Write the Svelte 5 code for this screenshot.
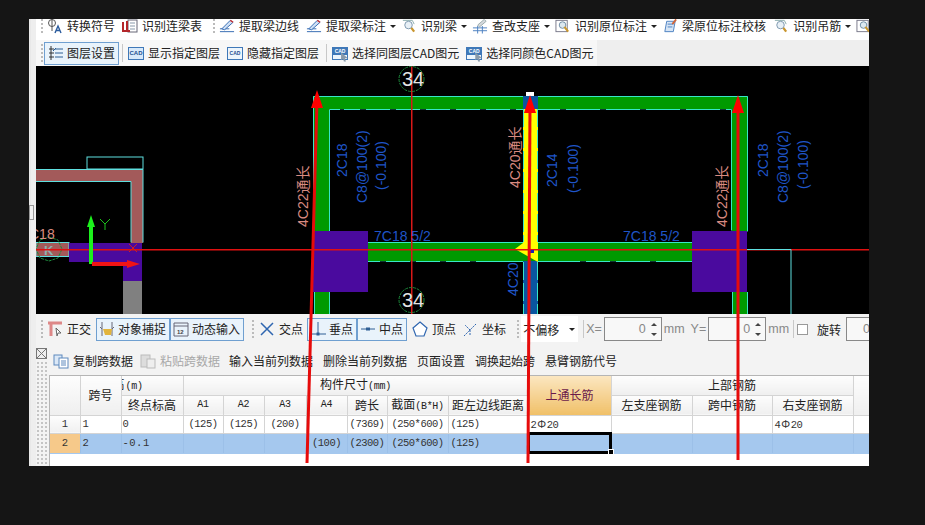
<script>
  const row1 = [
    { icon: 'sym', label: '转换符号' },
    { icon: 'tbl', label: '识别连梁表', sepAfter: true },
    { icon: 'pen', label: '提取梁边线' },
    { icon: 'pen', label: '提取梁标注', drop: true },
    { icon: 'mag', label: '识别梁', drop: true },
    { icon: 'sup', label: '查改支座', drop: true },
    { icon: 'box', label: '识别原位标注', drop: true },
    { icon: 'chk', label: '梁原位标注校核' },
    { icon: 'mag', label: '识别吊筋', drop: true },
    { icon: 'box', label: '' }
  ];
  const row2 = [
    { label: '显示指定图层', kind: 'solid' },
    { label: '隐藏指定图层', kind: 'small', sepAfter: true },
    { label: '选择同图层CAD图元', kind: 'pick' },
    { label: '选择同颜色CAD图元', kind: 'pick' }
  ];
  const tableActions = ['输入当前列数据', '删除当前列数据', '页面设置', '调换起始跨', '悬臂钢筋代号'];

  const colWidths = [30, 41, 62, 40, 41, 42, 41, 40, 61, 80, 83, 81, 80, 81, 16];

  const rows = [
    { n: 1, no: '1', end: '0', cells: ['(125)', '(125)', '(200)', '', '(7369)', '(250*600)', '(125)', ['2', '20'], '', '', ['4', '20'], ''] },
    { n: 2, no: '2', end: '-0.1', cells: ['', '', '', '(100)', '(2300)', '(250*600)', '(125)', '', '', '', '', ''], active: true }
  ];

  // [bottom x, bottom y, top x, tip y]
  const redLines = [
    [307, 463, 317, 90],
    [528, 463, 530, 95],
    [738, 460, 738, 95]
  ];
</script>

<div class="window">
  <div class="bar bar-top">
    <span class="grip"></span>
    {#each row1 as item}
      <span class="tool">
        {#if item.icon === 'sym'}
          <svg width="16" height="16" viewBox="0 0 16 16"><circle cx="5" cy="5" r="3.5" fill="none" stroke="#555" /><path d="M5 1v12" stroke="#555" /><path d="M8 15l3-7 3 7M9.5 12.5h3" stroke="#2b5c9e" stroke-width="1.4" fill="none" /></svg>
        {:else if item.icon === 'tbl'}
          <svg width="16" height="16" viewBox="0 0 16 16"><rect x="6" y="2" width="9" height="12" fill="#fff" stroke="#667" /><path d="M8 5h5M8 8h5M8 11h5" stroke="#89a" /><path d="M1 4v9h7M5 3v9" stroke="#b3262a" stroke-width="2" fill="none" /></svg>
        {:else if item.icon === 'pen'}
          <svg width="16" height="16" viewBox="0 0 17 16"><path d="M1 14h15M1 11h10" stroke="#2f66b0" /><path d="M3 11l9-9 3 2-9 8z" fill="#cfe0f5" stroke="#2f66b0" /><path d="M12 2l3 2" stroke="#c33" stroke-width="1.5" /></svg>
        {:else if item.icon === 'mag'}
          <svg width="16" height="16" viewBox="0 0 17 16"><path d="M2 2h10l2 4" fill="none" stroke="#8aa" /><circle cx="8" cy="7" r="4" fill="#e8f0f6" stroke="#7b95ad" /><path d="M11 10l3 4" stroke="#c9962e" stroke-width="2.4" /></svg>
        {:else if item.icon === 'sup'}
          <svg width="16" height="16" viewBox="0 0 17 16"><path d="M1 10h15M1 13h15M6 8v8M11 8v8" stroke="#4a7fc0" /><path d="M6 7l7-6 2 2-7 6z" fill="#d5d9de" stroke="#9aa" /></svg>
        {:else if item.icon === 'box'}
          <svg width="16" height="16" viewBox="0 0 17 16"><rect x="1" y="2" width="12" height="12" fill="#fff" stroke="#778" /><circle cx="8" cy="7" r="3.5" fill="#dce8f0" stroke="#6d8ba3" /><path d="M10 9l4 5" stroke="#c9962e" stroke-width="2.2" /></svg>
        {:else}
          <svg width="16" height="16" viewBox="0 0 17 16"><path d="M3 14l2-11h9l-2 11z" fill="#d7e5f5" stroke="#4a7fc0" /><path d="M6 6h6M6 9h5" stroke="#4a7fc0" /><path d="M11 6l4-5" stroke="#d0653a" stroke-width="2" /></svg>
        {/if}
        {#if item.label}<span>{item.label}</span>{/if}
        {#if item.drop}<i class="caret"></i>{/if}
      </span>
      {#if item.sepAfter}<span class="grip grip-mid"></span>{/if}
    {/each}
  </div>

  <div class="bar bar-layer">
    <span class="grip"></span>
    <span class="tool tool-on">
      <svg width="16" height="16" viewBox="0 0 16 16"><path d="M3 1v14M1 4h5M1 8h5M1 12h5" stroke="#333" /><path d="M8 3l-3 3M7 4h8M7 8h8M7 12h8" stroke="#2d5f94" /></svg>
      <span>图层设置</span>
    </span>
    <span class="sep"></span>
    {#each row2 as item}
      <span class="tool tool-cad">
        <span class="cad cad-{item.kind}">CAD</span>
        <span>{item.label}</span>
      </span>
      {#if item.sepAfter}<span class="sep"></span>{/if}
    {/each}
  </div>

  <div class="canvas">
    <svg width="833" height="248" viewBox="36 66 833 248">
      <!-- left hand column and beam -->
      <rect x="87" y="157" width="56" height="12" fill="none" stroke="#5fe0e0" />
      <rect x="36" y="169" width="107" height="13" fill="#a35a5a" />
      <rect x="131" y="182" width="12" height="61" fill="#a35a5a" />
      <path d="M36 169.500h107v73M36 181.500h95v61" fill="none" stroke="#5fe0e0" />
      <rect x="36" y="242.500" width="33" height="14" fill="#a35a5a" stroke="#5fe0e0" />
      <rect x="69" y="243" width="73" height="19" fill="#4a0a9e" />
      <rect x="123" y="243" width="19" height="38" fill="#4a0a9e" />
      <rect x="123" y="281" width="19" height="33" fill="#808080" />
      <polygon points="49,237 58,240 62,249 58,258 49,261 40,258 36,249 40,240" fill="none" stroke="#1d8a3c" stroke-dasharray="3 1" />
      <text x="29" y="239" class="t t-salmon">C18</text>
      <text x="44" y="255" class="t t-k">K</text>

      <!-- green frame -->
      <rect x="313" y="96" width="435" height="13" fill="#009a00" />
      <rect x="314" y="109" width="15" height="122" fill="#009a00" />
      <rect x="732" y="109" width="16" height="122" fill="#009a00" />
      <rect x="314" y="292" width="15" height="22" fill="#009a00" />
      <rect x="732" y="292" width="16" height="22" fill="#009a00" />
      <rect x="368" y="242" width="325" height="20" fill="#009a00" />
      <path d="M313.500 231V96.500h434v135M329.500 231V109.500h402v121M314.500 292v22M329.500 292v22M732.500 292v22M747.500 292v22" fill="none" stroke="#38e6c8" />
      <path d="M368 242.500h325M368 261.500h325" fill="none" stroke="#38e6c8" />
      <path d="M340 110h4M360 110h6M390 110h6M420 110h6M450 110h6M480 110h6M510 110h6M560 110h6M600 110h6M640 110h6M680 110h6M720 110h6M380 262h6M410 262h6M440 262h6M470 262h6M580 262h6M610 262h6M650 262h6" stroke="#000" stroke-width="1.500" />

      <!-- centre beam -->
      <rect x="523" y="96" width="15" height="13" fill="#0a55a0" />
      <rect x="523" y="109" width="15" height="134" fill="#ffff00" />
      <rect x="523" y="261" width="15" height="53" fill="#0a55a0" />
      <polygon points="515,249 523,243 538,243 538,262" fill="#ffff00" />
      <rect x="526" y="92" width="8" height="4" fill="#fff" />
      <path d="M523.500 109v133M537.500 109v133M523.500 262v52M537.500 262v52" stroke="#38e6c8" stroke-dasharray="18 3" />

      <!-- purple columns -->
      <rect x="313" y="231" width="55" height="61" fill="#4a0a9e" />
      <rect x="692" y="231" width="55" height="61" fill="#4a0a9e" />

      <!-- axis lines -->
      <rect x="36" y="249" width="833" height="1.500" fill="#e01010" />
      <rect x="411" y="66" width="1.500" height="248" fill="#d81818" />
      <path d="M747 249.500h44v64.500" fill="none" stroke="#5fe0e0" />
      <rect x="528" y="250" width="6" height="3" fill="#2020b0" />
      <circle cx="411.500" cy="79" r="12.500" fill="none" stroke="#1d8a3c" stroke-dasharray="3 1" />
      <circle cx="411.500" cy="300" r="12.500" fill="none" stroke="#1d8a3c" stroke-dasharray="3 1" />
      <text x="413" y="86" class="t t-axis">34</text>
      <text x="413" y="307" class="t t-axis">34</text>

      <!-- beam labels -->
      <text x="374" y="241" class="t t-blue">7C18 5/2</text>
      <text x="623" y="241" class="t t-blue">7C18 5/2</text>
      <text transform="translate(308,227) rotate(-90)" class="t t-salmon">4C22通长</text>
      <text transform="translate(347,177) rotate(-90)" class="t t-blue">2C18</text>
      <text transform="translate(367,203) rotate(-90)" class="t t-blue">C8@100(2)</text>
      <text transform="translate(386,190) rotate(-90)" class="t t-blue">(-0.100)</text>
      <text transform="translate(520,188) rotate(-90)" class="t t-salmon">4C20通长</text>
      <text transform="translate(557,187) rotate(-90)" class="t t-blue">2C14</text>
      <text transform="translate(578,193) rotate(-90)" class="t t-blue">(-0.100)</text>
      <text transform="translate(727,227) rotate(-90)" class="t t-salmon">4C22通长</text>
      <text transform="translate(768,177) rotate(-90)" class="t t-blue">2C18</text>
      <text transform="translate(788,203) rotate(-90)" class="t t-blue">C8@100(2)</text>
      <text transform="translate(808,189) rotate(-90)" class="t t-blue">(-0.100)</text>
      <text transform="translate(518,296) rotate(-90)" class="t t-blue">4C20</text>

      <!-- UCS axes -->
      <path d="M91 264v-40" stroke="#1cf01c" stroke-width="4" />
      <polygon points="91,215 87,227 95,227" fill="#1cf01c" />
      <path d="M92 264h36" stroke="#f01414" stroke-width="4" />
      <polygon points="140,264 127,260 127,268" fill="#f01414" />
      <path d="M100 219l5 5 5-5M105 224v6" fill="none" stroke="#1cc01c" />
      <path d="M129 244l8 8M137 244l-8 8" stroke="#d02020" />
    </svg>
  </div>

  <div class="bar bar-snap">
    <span class="grip"></span>
    <span class="tool">
      <svg width="16" height="16" viewBox="0 0 16 16"><path d="M1 2h14M4 2v13" stroke="#d88" stroke-width="3" fill="none" /><path d="M9 7l5 5-3 0-1 3z" fill="#fff" stroke="#666" /></svg>
      <span>正交</span>
    </span>
    <span class="tool tool-on tool-first">
      <svg width="16" height="16" viewBox="0 0 16 16"><path d="M3 1v14M13 1v14" stroke="#667" /><path d="M3 8l-2-2M13 8l2-2" stroke="#667" /><path d="M4 8h9l-1 6H6z" fill="#e2b53e" /></svg>
      <span>对象捕捉</span>
    </span>
    <span class="tool tool-on">
      <svg width="16" height="16" viewBox="0 0 16 16"><path d="M1 2h14M1 5h14M1 2v13h14V2" fill="none" stroke="#667" /><text x="4" y="13" class="mini">12</text></svg>
      <span>动态输入</span>
    </span>
    <span class="grip grip-snap"></span>
    <span class="tool">
      <svg width="16" height="16" viewBox="0 0 16 16"><path d="M2 2l12 12M14 2L2 14" stroke="#2f66b0" stroke-width="1.500" /></svg>
      <span>交点</span>
    </span>
    <span class="tool tool-on tool-point">
      <svg width="16" height="16" viewBox="0 0 16 16"><path d="M8 1v12M0 13h16" stroke="#2f5f95" /><rect x="6.500" y="11.500" width="3" height="3" fill="#2f5f95" /></svg>
      <span>垂点</span>
    </span>
    <span class="tool tool-on">
      <svg width="16" height="16" viewBox="0 0 16 16"><path d="M1 8h14" stroke="#2f5f95" /><rect x="6" y="6.500" width="4" height="3" fill="#2f5f95" /></svg>
      <span>中点</span>
    </span>
    <span class="tool tool-vertex">
      <svg width="16" height="16" viewBox="0 0 16 16"><polygon points="8,1 15,7 12,15 4,15 1,7" fill="#fff" stroke="#2f66b0" stroke-width="1.200" /></svg>
      <span>顶点</span>
    </span>
    <span class="tool tool-coord">
      <svg width="16" height="16" viewBox="0 0 16 16"><path d="M2 15L8 9l6-6M8 9L3 4M8 9v6" stroke="#2f66b0" fill="none" stroke-dasharray="2 1" /></svg>
      <span>坐标</span>
    </span>
    <span class="grip grip-select"></span>
    <span class="select"><span>不偏移</span><i class="caret caret-dark"></i></span>
    <span class="sep sep-x"></span>
    <span class="muted">X=</span>
    <span class="spin"><span>0</span><span class="arrows"><i class="up"></i><i class="down"></i></span></span>
    <span class="muted">mm</span>
    <span class="muted y-label">Y=</span>
    <span class="spin"><span>0</span><span class="arrows"><i class="up"></i><i class="down"></i></span></span>
    <span class="muted">mm</span>
    <span class="sep sep-check"></span>
    <span class="check"></span>
    <span class="rotate">旋转</span>
    <span class="spin spin-cut"><span>0</span></span>
  </div>

  <div class="lower">
    <div class="side">
      <svg width="11" height="11" viewBox="0 0 11 11"><rect x="0.500" y="0.500" width="10" height="10" fill="#eee" stroke="#777" /><path d="M0 0l11 11M11 0L0 11" stroke="#777" /></svg>
      <div class="side-dots"></div>
    </div>
    <div class="lower-main">
      <div class="bar bar-actions">
        <span class="tool">
          <svg width="16" height="16" viewBox="0 0 16 16"><rect x="1" y="2" width="8" height="10" fill="#dbe8f7" stroke="#5f89bd" /><rect x="6" y="5" width="9" height="10" fill="#fff" stroke="#5f89bd" /><path d="M8 8h5M8 10h5M8 12h5" stroke="#5f89bd" /></svg>
          <span>复制跨数据</span>
        </span>
        <span class="tool tool-disabled">
          <svg width="16" height="16" viewBox="0 0 16 16"><rect x="1" y="2" width="9" height="12" fill="#ddd" stroke="#bbb" /><rect x="7" y="6" width="8" height="9" fill="#eee" stroke="#bbb" /></svg>
          <span>粘贴跨数据</span>
        </span>
        {#each tableActions as action}
          <span class="tool tool-plain">{action}</span>
        {/each}
      </div>

      <div class="grid-wrap">
        <table>
          <colgroup>
            {#each colWidths as w}<col style:width="{w}px" />{/each}
          </colgroup>
          <thead>
            <tr class="head-a">
              <th rowspan="2"></th>
              <th rowspan="2">跨号</th>
              <th class="left clipped"><span class="cut">高</span><span class="mono">(m)</span></th>
              <th colspan="7">构件尺寸<span class="mono">(mm)</span></th>
              <th rowspan="2" class="hot">上通长筋</th>
              <th colspan="3">上部钢筋</th>
              <th rowspan="2"></th>
            </tr>
            <tr class="head-b">
              <th>终点标高</th>
              <th class="mono">A1</th>
              <th class="mono">A2</th>
              <th class="mono">A3</th>
              <th class="mono">A4</th>
              <th>跨长</th>
              <th>截面<span class="mono">(B*H)</span></th>
              <th>距左边线距离</th>
              <th>左支座钢筋</th>
              <th>跨中钢筋</th>
              <th>右支座钢筋</th>
            </tr>
          </thead>
          <tbody>
            {#each rows as row}
              <tr class:active={row.active}>
                <td class="idx" class:idx-on={row.active}>{row.n}</td>
                <td class="left">{row.no}</td>
                <td class="left end-cell">{row.end}</td>
                {#each row.cells as cell, i}
                  <td class:left={i >= 6} class:focus={row.active && i === 7}>
                    {#if Array.isArray(cell)}
                      {cell[0]}<span class="rebar">Φ</span>{cell[1]}
                    {:else}
                      {cell}
                    {/if}
                  </td>
                {/each}
              </tr>
            {/each}
          </tbody>
        </table>
      </div>
    </div>
  </div>

  <span class="handle"></span>

  <!-- hand-drawn annotation arrows over the screenshot -->
  <svg class="marks" width="925" height="525" viewBox="0 0 925 525">
    {#each redLines as [x1, y1, x2, tip]}
      <path d="M{x1} {y1}L{x2} {tip + 10}" stroke="#e60b0b" stroke-width="3" />
      <polygon points="{x2},{tip} {x2 - 6},{tip + 18} {x2 + 6},{tip + 18}" fill="#f00" />
    {/each}
  </svg>
</div>

<style>
  :global(body) {
    background: #151515;
  }

  .window {
    box-sizing: border-box;
    width: 840px;
    height: 447px;
    margin: 19px 0 0 29px;
    background: #eeeeee;
    border-left: 2px solid #e8e8e8;
    padding-left: 5px;
    display: flex;
    flex-direction: column;
    font-family: "Noto Sans CJK SC", "Liberation Sans", sans-serif;
    font-size: 12px;
    color: #222;
    overflow: hidden;
  }

  .bar {
    display: flex;
    align-items: center;
    white-space: nowrap;
    overflow: hidden;
    flex: none;
  }

  .bar-top {
    height: 21px;
    background: #fff;
    align-items: flex-start;
    padding-left: 5px;
  }

  .bar-layer {
    height: 26px;
    width: fit-content;
    padding: 0 4px 0 5px;
    background: #f7f7f7;
  }

  .bar-snap {
    height: 30px;
    padding-left: 5px;
    background: #f3f3f3;
  }

  .tool {
    display: inline-flex;
    align-items: center;
    gap: 4px;
    height: 23px;
    line-height: 14px;
    flex: none;
  }

  .bar-top .tool {
    height: 14px;
  }

  .bar-top .tool + .tool {
    margin-left: 7px;
  }

  .bar-top .caret {
    margin-right: -2px;
  }

  .tool-on {
    box-sizing: border-box;
    gap: 3px;
    border: 1px solid #6f9fd0;
    background: #e9f3fb;
    padding: 0 3px 0 2px;
  }

  .bar-layer .tool-on {
    padding-left: 3px;
    margin-left: 1px;
  }

  .tool-first {
    margin-left: 5px;
  }

  .tool-point {
    margin-left: 4px;
  }

  .tool-vertex {
    margin-left: 5px;
  }

  .tool-coord {
    margin-left: 6px;
  }

  .tool-cad + .tool-cad {
    margin-left: 7px;
  }

  .tool-disabled {
    color: #a8a8a8;
    margin-left: 7px;
  }

  .tool-plain {
    margin-left: 10px;
  }

  .tool-disabled + .tool-plain {
    margin-left: 9px;
  }

  .grip {
    width: 2px;
    height: 14px;
    flex: none;
    margin-right: 4px;
    background: repeating-linear-gradient(to bottom, #bbb 0 2px, transparent 2px 4px);
  }

  .bar-layer .grip,
  .grip-select {
    margin-right: 2px;
  }

  .bar-layer .grip {
    margin-right: 0;
    height: 18px;
  }

  .bar-snap .grip {
    height: 18px;
  }

  .grip-mid {
    margin-left: 11px;
  }

  .grip-snap {
    margin: 0 5px 0 8px;
  }

  .grip-select {
    margin-left: 11px;
  }

  .sep {
    width: 1px;
    height: 18px;
    background: #c8c8c8;
    flex: none;
    margin: 0 5px 0 3px;
  }

  .tool-cad + .sep {
    margin-left: 7px;
  }

  .sep-x {
    margin: 0 2px 0 5px;
  }

  .sep-check {
    margin: 0 3px 0 4px;
  }

  .caret {
    width: 0;
    height: 0;
    border: 3px solid transparent;
    border-top: 3px solid #222;
    border-bottom: 0;
  }

  .caret-dark {
    margin-left: auto;
    margin-right: 3px;
  }

  .cad {
    position: relative;
    box-sizing: border-box;
    width: 16px;
    height: 13px;
    border: 1px solid #3f78b8;
    background: #d8e9fa;
    color: #1c4f8f;
    font: bold 6px/11px "Liberation Sans", sans-serif;
    text-align: center;
    flex: none;
  }

  .cad-small {
    font-size: 5px;
    background: #edf5fc;
  }

  .cad-pick {
    font-size: 5px;
    line-height: 7px;
    background: linear-gradient(#3f78b8 0 7px, #edf5fc 7px);
    color: #fff;
  }

  /* little cursor sitting on the selection icons */
  .cad-pick::after {
    content: '';
    position: absolute;
    right: -1px;
    bottom: -3px;
    width: 7px;
    height: 9px;
    background: #8a9aaa;
    clip-path: polygon(0 0, 100% 65%, 55% 65%, 70% 100%, 40% 100%, 30% 70%, 0 85%);
  }

  .canvas {
    height: 248px;
    background: #000;
    flex: none;
    overflow: hidden;
  }

  .canvas svg {
    display: block;
  }

  .t {
    font-family: "Liberation Sans", "Noto Sans CJK SC", sans-serif;
    font-size: 14px;
  }

  .t-salmon {
    fill: #d98a80;
  }

  .t-blue {
    fill: #1f55c8;
  }

  .t-axis {
    fill: #e4e4e4;
    font-size: 20px;
    text-anchor: middle;
  }

  .t-k {
    fill: #8fb0b0;
    font-size: 13px;
    font-weight: bold;
  }

  .mini {
    font: bold 6px "Liberation Sans", sans-serif;
    fill: #444;
  }

  .select {
    box-sizing: border-box;
    display: inline-flex;
    align-items: center;
    width: 57px;
    height: 26px;
    background: #fff;
    flex: none;
    padding-left: 2px;
  }

  .muted {
    color: #888;
    font-family: "Liberation Sans", sans-serif;
    font-size: 12.500px;
  }

  .y-label {
    margin-left: 6px;
  }

  .spin {
    box-sizing: border-box;
    display: inline-flex;
    justify-content: flex-end;
    align-items: center;
    gap: 5px;
    width: 58px;
    height: 24px;
    margin: 0 2px;
    border: 1px solid #888;
    background: #f8f8f8;
    color: #888;
    font-family: "Liberation Sans", sans-serif;
    font-size: 12.500px;
    padding-right: 4px;
    flex: none;
  }

  .spin-cut {
    justify-content: flex-start;
    padding-left: 16px;
    margin-left: 5px;
  }

  .arrows {
    display: inline-flex;
    flex-direction: column;
    gap: 7px;
  }

  .arrows i {
    display: block;
    width: 0;
    height: 0;
    border: 3px solid transparent;
  }

  .arrows .up {
    border-top: 0;
    border-bottom: 3px solid #444;
  }

  .arrows .down {
    border-bottom: 0;
    border-top: 3px solid #444;
  }

  .check {
    box-sizing: border-box;
    width: 11px;
    height: 11px;
    border: 1px solid #999;
    background: #fff;
    flex: none;
    margin-right: 9px;
  }

  .rotate {
    flex: none;
  }

  .lower {
    flex: 1;
    display: flex;
    min-height: 0;
    background: #fff;
  }

  .side {
    box-sizing: border-box;
    width: 13px;
    flex: none;
    display: flex;
    flex-direction: column;
    gap: 2px;
    padding-top: 4px;
    background: #f3f3f3;
  }

  .side-dots {
    flex: 1;
    background: radial-gradient(circle, #c4c4c4 0.800px, transparent 1px) 0 0 / 4px 4px;
  }

  .lower-main {
    flex: 1;
    min-width: 0;
    display: flex;
    flex-direction: column;
  }

  .bar-actions {
    box-sizing: border-box;
    height: 31px;
    background: #f3f3f3;
    padding: 3px 0 0 4px;
  }

  .grid-wrap {
    flex: 1;
    border-left: 1px solid #b5b5b5;
    border-top: 1px solid #b5b5b5;
    overflow: hidden;
  }

  table {
    border-collapse: collapse;
    table-layout: fixed;
    width: 819px;
  }

  th,
  td {
    box-sizing: border-box;
    border-right: 1px solid #d4d4d4;
    border-bottom: 1px solid #d4d4d4;
    padding: 0 2px;
    overflow: hidden;
    white-space: nowrap;
    font-weight: normal;
    line-height: 14px;
    text-align: center;
  }

  th {
    background: linear-gradient(#fdfdfd, #efefef);
    font-size: 12px;
  }

  .head-a th {
    height: 19px;
  }

  .head-b th {
    height: 20px;
  }

  td {
    height: 18px;
    background: #fff;
    font-family: "Liberation Mono", monospace;
    font-size: 10.500px;
    letter-spacing: -0.500px;
    color: #333;
  }

  tr.active td {
    height: 20px;
  }

  .mono {
    font-family: "Liberation Mono", monospace;
    font-size: 10px;
    letter-spacing: -0.300px;
  }

  th.left,
  td.left {
    text-align: left;
  }

  .clipped {
    padding: 0;
  }

  .cut {
    margin-left: -9px;
    margin-right: 1px;
  }

  .end-cell {
    border-left: 1px solid #222;
    padding-left: 1px;
    letter-spacing: 0.500px;
  }

  th.hot {
    background: linear-gradient(#fbe6c0, #f0c068);
    color: #6b1a4a;
    border-left: 1px solid #e8b85c;
  }

  td.idx {
    background: linear-gradient(#fdfdfd, #f0f0f0);
  }

  tr.active td {
    background: #a5c8ee;
    border-right-color: #9cc0e8;
    border-bottom-color: #a5c8ee;
  }

  tr.active td.idx-on {
    background: #f6c98a;
  }

  td.focus {
    position: relative;
    overflow: visible;
    outline: 3px solid #000;
    outline-offset: -2px;
  }

  td.focus::after {
    content: '';
    position: absolute;
    right: -3px;
    bottom: -2px;
    width: 4px;
    height: 4px;
    background: #000;
    border: 1px solid #fff;
  }

  .rebar {
    font-family: "Noto Sans CJK SC", sans-serif;
    font-size: 11px;
    margin: 0 1px;
  }

  .handle {
    position: absolute;
    left: 29px;
    top: 205px;
    box-sizing: border-box;
    width: 5px;
    height: 15px;
    border: 1px solid #999;
    background: #f0f0f0;
  }

  .marks {
    position: absolute;
    left: 0;
    top: 0;
    pointer-events: none;
  }
</style>
